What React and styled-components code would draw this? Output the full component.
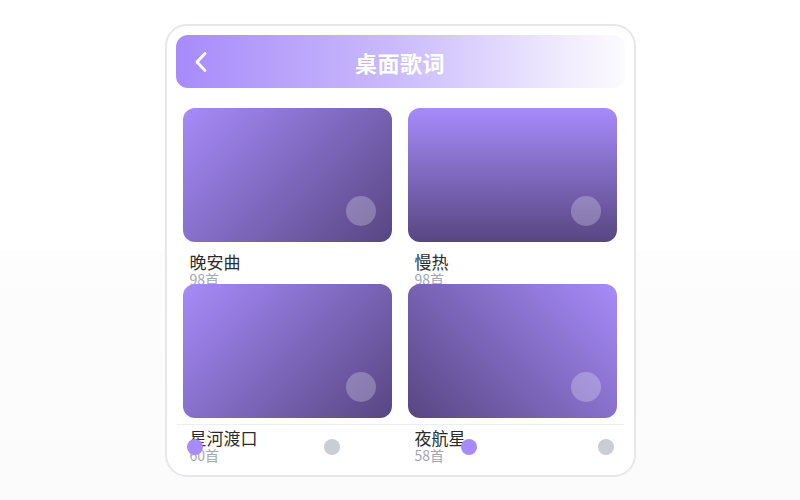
import React from 'react';
import styled, { createGlobalStyle } from 'styled-components';

const GlobalStyle = createGlobalStyle`
  html, body { margin: 0; padding: 0; }
  body {
    min-height: 500px;
    background: linear-gradient(180deg, #ffffff 0%, #ffffff 50%, #fdfdfd 50%, #fbfbfb 100%);
    font-family: "Noto Sans CJK SC", "Noto Sans", sans-serif;
  }
`;

const Page = styled.div`
  padding-top: 24px;
  display: flex;
  justify-content: center;
`;

const Frame = styled.div`
  position: relative;
  box-sizing: border-box;
  width: 471px;
  height: 453px;
  border: 2px solid #e6e7eb;
  border-radius: 22px;
  background: #ffffff;
  padding: 9px;
  overflow: hidden;
`;

const Header = styled.div`
  height: 53px;
  border-radius: 12px;
  background: linear-gradient(90deg, #a78bfa 0%, #cbbcfc 50%, #efe9fe 85%, #fcfbff 100%);
  display: grid;
  grid-template-columns: 40px 1fr 40px;
  align-items: center;
  padding: 0 18px;
`;

const BackButton = styled.button`
  border: 0;
  background: none;
  padding: 0;
  width: 14px;
  height: 22px;
  display: flex;
  align-items: center;
  cursor: pointer;
`;

const Title = styled.h1`
  margin: 0;
  text-align: center;
  color: #ffffff;
  font-size: 22px;
  font-weight: 700;
  letter-spacing: 0.5px;
  line-height: 1;
`;

const Grid = styled.div`
  margin: 20px 8px 0 7px;
  display: grid;
  grid-template-columns: 1fr 1fr;
  column-gap: 16px;
  grid-auto-rows: 176px;
`;

const Item = styled.div`
  display: flex;
  flex-direction: column;
`;

const Cover = styled.div`
  flex: 0 0 134px;
  border-radius: 12px;
  background: linear-gradient(${p => p.$angle}deg, #a78bfa 0%, #574682 100%);
  display: flex;
  align-items: flex-end;
  justify-content: flex-end;
  padding: 0 16px 16px 0;
  box-sizing: border-box;
`;

const PlayDot = styled.div`
  width: 30px;
  height: 30px;
  border-radius: 50%;
  background: rgba(255, 255, 255, 0.25);
`;

const Name = styled.div`
  margin-top: 10px;
  padding-left: 7px;
  font-size: 17px;
  line-height: 20px;
  color: #2b2b2b;
`;

const Count = styled.div`
  padding-left: 7px;
  font-size: 14px;
  line-height: 15px;
  color: #a3a7ae;
`;

const BottomBar = styled.div`
  position: absolute;
  left: 10px;
  right: 10px;
  bottom: 7px;
  height: 44px;
  border-top: 1px solid #eceef1;
  box-sizing: border-box;
  display: flex;
  align-items: center;
  justify-content: space-between;
  padding: 0 10px;
  z-index: 1;
`;

const Dot = styled.span`
  width: 16px;
  height: 16px;
  border-radius: 50%;
  background: ${p => (p.$active ? '#a78bfa' : '#c9cdd4')};
`;

const songs = [
  { title: '晚安曲', count: 98, angle: 135 },
  { title: '慢热', count: 98, angle: 180 },
  { title: '星河渡口', count: 60, angle: 135 },
  { title: '夜航星', count: 58, angle: 225 },
];

export default function App() {
  return (
    <>
      <GlobalStyle />
      <Page>
        <Frame>
          <Header>
            <BackButton aria-label="返回">
              <svg width="14" height="22" viewBox="0 0 14 22" fill="none">
                <polyline points="11,2.5 3,11 11,19.5" stroke="#ffffff" strokeWidth="2.8" strokeLinecap="round" strokeLinejoin="round" />
              </svg>
            </BackButton>
            <Title>桌面歌词</Title>
            <span />
          </Header>
          <Grid>
            {songs.map(s => (
              <Item key={s.title}>
                <Cover $angle={s.angle}>
                  <PlayDot />
                </Cover>
                <Name>{s.title}</Name>
                <Count>{s.count}首</Count>
              </Item>
            ))}
          </Grid>
          <BottomBar>
            <Dot $active />
            <Dot />
            <Dot $active />
            <Dot />
          </BottomBar>
        </Frame>
      </Page>
    </>
  );
}
